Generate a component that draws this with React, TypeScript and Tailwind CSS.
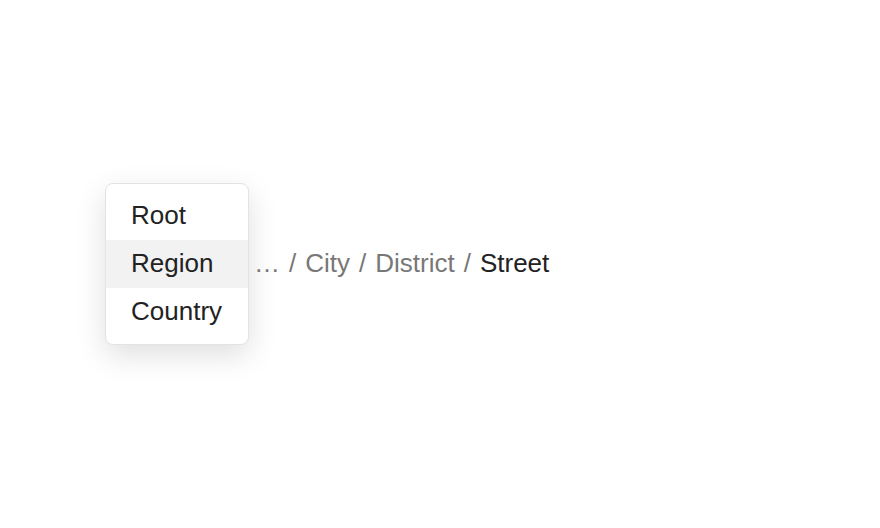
import React from "react";

export default function App() {
  return (
    <div
      className="w-[880px] h-[528px] bg-white"
      style={{ fontFamily: '"Liberation Sans", Arial, sans-serif' }}
    >
      <div className="pt-[183px] pl-[105px] flex items-center gap-[5px] text-[26px]">
        <div className="w-[144px] rounded-[8px] border border-[#e3e3e3] bg-white py-[8px] shadow-[0_10px_30px_rgba(0,0,0,0.13)] text-[#222222]">
          <div className="h-[48px] flex items-center pl-[25px] pb-[2px] leading-none">Root</div>
          <div className="h-[48px] flex items-center pl-[25px] pb-[2px] leading-none bg-[#f2f2f2]">Region</div>
          <div className="h-[48px] flex items-center pl-[25px] pb-[2px] leading-none">Country</div>
        </div>
        <div className="flex items-center gap-[9px] leading-[48px] text-[#787878] mb-[2px]">
          <span>…</span>
          <span>/</span>
          <span>City</span>
          <span>/</span>
          <span>District</span>
          <span>/</span>
          <span className="text-[#222222]">Street</span>
        </div>
      </div>
    </div>
  );
}
